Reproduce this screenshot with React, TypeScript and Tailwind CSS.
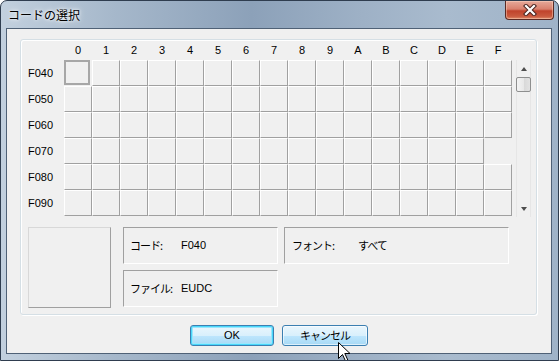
import React from "react";

const cols = ["0", "1", "2", "3", "4", "5", "6", "7", "8", "9", "A", "B", "C", "D", "E", "F"];
const rows = ["F040", "F050", "F060", "F070", "F080", "F090"];

const jp = "font-['MS_UI_Gothic','Noto_Sans_CJK_JP',sans-serif]";
const lat = "font-['Liberation_Sans','Noto_Sans_CJK_JP',sans-serif]";

function Cell({ r, c }: { r: number; c: number }) {
    if (r === 3 && c === 15) return <div className="w-[28px] h-[26px]" />;
    if (r === 0 && c === 0) {
        return (
            <div className="w-[28px] h-[26px]">
                <div className="w-[26px] h-[25px] border-2 border-[#a7a7a7]" />
            </div>
        );
    }
    return (
        <div className="w-[28px] h-[26px] border border-t-white border-l-white border-r-[#a0a0a0] border-b-[#a0a0a0]" />
    );
}

function Scrollbar() {
    return (
        <div className="ml-[4px] w-[15px] h-[157px] border-x border-[#e6e6e6] bg-[#f0f0f0] flex flex-col items-center">
            <div className="h-[17px] flex items-center justify-center">
                <div className="w-0 h-0 border-x-[3px] border-x-transparent border-b-[4px] border-b-[#4d4d4d]" />
            </div>
            <div className="w-[15px] h-[15px] rounded-[2px] border border-[#8e8f8f] bg-[linear-gradient(90deg,#f3f3f3_0%,#e8e8e8_50%,#d8d8d8_51%,#e2e2e2_100%)]" />
            <div className="flex-1" />
            <div className="h-[17px] flex items-center justify-center">
                <div className="w-0 h-0 border-x-[3px] border-x-transparent border-t-[4px] border-t-[#4d4d4d]" />
            </div>
        </div>
    );
}

function InfoBox({ label, value, labelW, w, pl }: { label: string; value: string; labelW: string; w: string; pl: string }) {
    return (
        <div className={`${w} h-[37px] border border-t-[#a0a0a0] border-l-[#a0a0a0] border-r-white border-b-white flex items-center ${pl} text-[11px] text-black`}>
            <span className={`${labelW} ${jp} tracking-[-1px]`}>{label}</span>
            <span className={`${lat} ${value === "すべて" ? jp + " tracking-[-1px]" : ""}`}>{value}</span>
        </div>
    );
}

export default function App() {
    return (
        <div className="relative w-[559px] h-[361px] rounded-t-[7px] border border-[#2f3d4f] bg-[linear-gradient(90deg,#c2d0de_0%,#a6b8cb_20%,#8ca1b9_45%,#9eb1c6_65%,#a9bbce_80%,#9fb3c8_100%)] flex flex-col overflow-hidden">
            <div className="h-[27px] flex items-start">
                <span className={`mt-[6px] ml-[7px] text-[12px] leading-[16px] text-black ${jp} [text-shadow:0_0_6px_#ffffff,0_0_3px_#ffffff]`}>
                    コードの選択
                </span>
                <div className="ml-auto mr-[4px] w-[49px] h-[19px] rounded-b-[4px] border border-t-0 border-[#5a2a24] bg-[linear-gradient(180deg,#e6a99a_0%,#d9806d_45%,#c0432c_55%,#c95a3f_85%,#e08a6a_100%)] flex items-center justify-center shadow-[inset_0_0_0_1px_rgba(255,220,200,0.45)]">
                    <svg width="14" height="12" viewBox="0 0 14 12">
                        <path d="M3 2 L11 10 M11 2 L3 10" stroke="#4a2520" strokeWidth="4.2" strokeLinecap="square" />
                        <path d="M3 2 L11 10 M11 2 L3 10" stroke="#ffffff" strokeWidth="2.2" strokeLinecap="square" />
                    </svg>
                </div>
            </div>

            <div className="ml-[5px] mr-[6px] mb-[6px] flex-1 border border-[#4f6176] bg-[#f0f0f0] flex flex-col">
                <div className="mt-[10px] ml-[13px] w-[517px] h-[276px] border border-[#d5dfe5] rounded-[3px] shadow-[inset_1px_1px_0_#ffffff,1px_1px_0_#ffffff] flex flex-col">
                    <div className={`h-[20px] flex pl-[43px] items-center text-[11px] text-black ${lat}`}>
                        {cols.map((c) => (
                            <div key={c} className="w-[28px] text-center">{c}</div>
                        ))}
                    </div>
                    <div className="flex">
                        <div className="flex flex-col">
                            {rows.map((r, ri) => (
                                <div key={r} className="flex h-[26px]">
                                    <div className={`w-[43px] pl-[7px] flex items-center text-[11px] text-black ${lat}`}>{r}</div>
                                    {cols.map((c, ci) => (
                                        <Cell key={c} r={ri} c={ci} />
                                    ))}
                                </div>
                            ))}
                        </div>
                        <Scrollbar />
                    </div>
                    <div className="mt-[10px] flex pl-[7px]">
                        <div className="w-[83px] h-[81px] border border-t-[#d8d8d8] border-l-[#d8d8d8] border-r-[#a0a0a0] border-b-[#a0a0a0]" />
                        <div className="ml-[12px] flex flex-col">
                            <InfoBox label="コード:" value="F040" labelW="w-[51px]" w="w-[155px]" pl="pl-[6px]" />
                            <div className="mt-[6px]">
                                <InfoBox label="ファイル:" value="EUDC" labelW="w-[51px]" w="w-[155px]" pl="pl-[6px]" />
                            </div>
                        </div>
                        <div className="ml-[6px]">
                            <InfoBox label="フォント:" value="すべて" labelW="w-[66px]" w="w-[225px]" pl="pl-[7px]" />
                        </div>
                    </div>
                </div>

                <div className="mt-[10px] flex justify-center gap-[8px]">
                    <div className={`w-[84px] h-[21px] rounded-[3px] border border-[#3c7fb1] shadow-[inset_0_0_0_1px_#48d7fb,inset_0_0_0_2px_#9be6fc] bg-[linear-gradient(180deg,#eaf6fd_0%,#d9f0fc_50%,#bee6fd_51%,#a7d9f5_100%)] flex items-center justify-center text-[11px] text-black ${lat}`}>
                        OK
                    </div>
                    <div className={`w-[86px] h-[21px] rounded-[3px] border border-[#3c7fb1] shadow-[inset_0_0_0_1px_rgba(255,255,255,0.6)] bg-[linear-gradient(180deg,#eaf6fd_0%,#d9f0fc_50%,#bee6fd_51%,#a7d9f5_100%)] flex items-center justify-center text-[11px] text-black tracking-[-1px] ${jp}`}>
                        キャンセル
                    </div>
                </div>
            </div>

            <svg className="absolute left-[337px] top-[341px]" width="13" height="20" viewBox="0 0 13 20">
                <path d="M0.5 0.5 L0.5 16.5 L4.5 12.5 L7.5 19 L9.8 18 L6.8 11.5 L12 11.5 Z" fill="#ffffff" stroke="#000000" strokeWidth="1" strokeLinejoin="miter" />
            </svg>
        </div>
    );
}
